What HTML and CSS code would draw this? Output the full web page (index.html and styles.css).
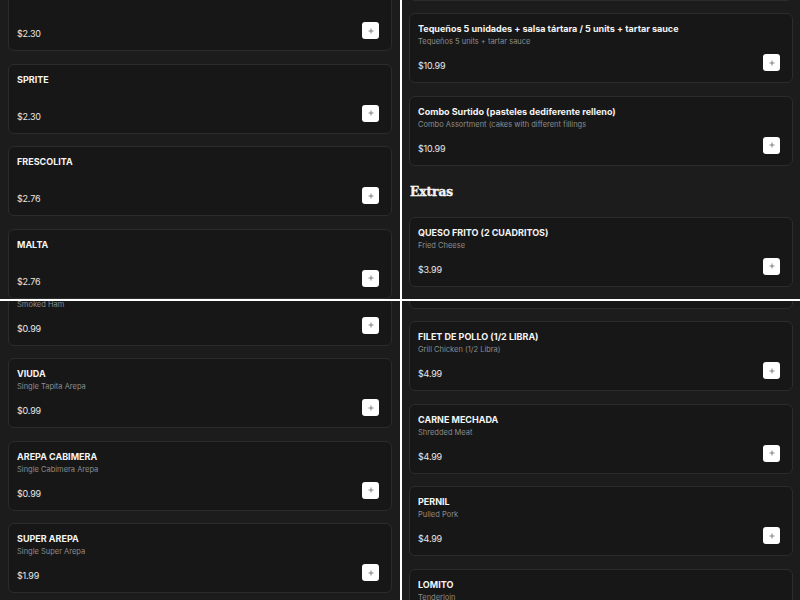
FILE: index.html
```html
<!DOCTYPE html>
<html lang="es">
<head>
<meta charset="utf-8">
<title>Menú</title>
<link rel="stylesheet" href="styles.css">
</head>
<body>
<main class="board">
  <section class="panel">
    <div class="feed feed-a">
      <article class="card"><div class="info"><h3 class="name">COCA COLA ZERO</h3></div><div class="foot"><span class="price">$2.30</span><button class="add" type="button" aria-label="Agregar"><svg viewBox="0 0 6 6" width="6" height="6"><path d="M3 0.5v5M0.5 3h5"/></svg></button></div></article>
      <article class="card"><div class="info"><h3 class="name">SPRITE</h3></div><div class="foot"><span class="price">$2.30</span><button class="add" type="button" aria-label="Agregar"><svg viewBox="0 0 6 6" width="6" height="6"><path d="M3 0.5v5M0.5 3h5"/></svg></button></div></article>
      <article class="card"><div class="info"><h3 class="name">FRESCOLITA</h3></div><div class="foot"><span class="price">$2.76</span><button class="add" type="button" aria-label="Agregar"><svg viewBox="0 0 6 6" width="6" height="6"><path d="M3 0.5v5M0.5 3h5"/></svg></button></div></article>
      <article class="card"><div class="info"><h3 class="name">MALTA</h3></div><div class="foot"><span class="price">$2.76</span><button class="add" type="button" aria-label="Agregar"><svg viewBox="0 0 6 6" width="6" height="6"><path d="M3 0.5v5M0.5 3h5"/></svg></button></div></article>
    </div>
  </section>
  <section class="panel panel-r">
    <div class="feed feed-b">
      <article class="card"><div class="info"><h3 class="name">Tequeños 10 unidades + salsa tártara</h3><p class="desc">Tequeños 10 units + tartar sauce</p></div><div class="foot"><span class="price">$19.99</span><button class="add" type="button" aria-label="Agregar"><svg viewBox="0 0 6 6" width="6" height="6"><path d="M3 0.5v5M0.5 3h5"/></svg></button></div></article>
      <article class="card"><div class="info"><h3 class="name">Tequeños 5 unidades + salsa tártara / 5 units + tartar sauce</h3><p class="desc">Tequeños 5 units + tartar sauce</p></div><div class="foot"><span class="price">$10.99</span><button class="add" type="button" aria-label="Agregar"><svg viewBox="0 0 6 6" width="6" height="6"><path d="M3 0.5v5M0.5 3h5"/></svg></button></div></article>
      <article class="card"><div class="info"><h3 class="name">Combo Surtido (pasteles dediferente relleno)</h3><p class="desc">Combo Assortment (cakes with different fillings</p></div><div class="foot"><span class="price">$10.99</span><button class="add" type="button" aria-label="Agregar"><svg viewBox="0 0 6 6" width="6" height="6"><path d="M3 0.5v5M0.5 3h5"/></svg></button></div></article>
      <h2 class="section-title">Extras</h2>
      <article class="card"><div class="info"><h3 class="name">QUESO FRITO (2 CUADRITOS)</h3><p class="desc">Fried Cheese</p></div><div class="foot"><span class="price">$3.99</span><button class="add" type="button" aria-label="Agregar"><svg viewBox="0 0 6 6" width="6" height="6"><path d="M3 0.5v5M0.5 3h5"/></svg></button></div></article>
      <article class="card"><div class="info"><h3 class="name">TAJADAS</h3><p class="desc">Fried Plantains</p></div><div class="foot"><span class="price">$3.99</span><button class="add" type="button" aria-label="Agregar"><svg viewBox="0 0 6 6" width="6" height="6"><path d="M3 0.5v5M0.5 3h5"/></svg></button></div></article>
    </div>
  </section>
  <section class="panel panel-b">
    <div class="feed feed-c">
      <article class="card"><div class="info"><h3 class="name">JAMÓN AHUMADO</h3><p class="desc">Smoked Ham</p></div><div class="foot"><span class="price">$0.99</span><button class="add" type="button" aria-label="Agregar"><svg viewBox="0 0 6 6" width="6" height="6"><path d="M3 0.5v5M0.5 3h5"/></svg></button></div></article>
      <article class="card"><div class="info"><h3 class="name">VIUDA</h3><p class="desc">Single Tapita Arepa</p></div><div class="foot"><span class="price">$0.99</span><button class="add" type="button" aria-label="Agregar"><svg viewBox="0 0 6 6" width="6" height="6"><path d="M3 0.5v5M0.5 3h5"/></svg></button></div></article>
      <article class="card"><div class="info"><h3 class="name">AREPA CABIMERA</h3><p class="desc">Single Cabimera Arepa</p></div><div class="foot"><span class="price">$0.99</span><button class="add" type="button" aria-label="Agregar"><svg viewBox="0 0 6 6" width="6" height="6"><path d="M3 0.5v5M0.5 3h5"/></svg></button></div></article>
      <article class="card"><div class="info"><h3 class="name">SUPER AREPA</h3><p class="desc">Single Super Arepa</p></div><div class="foot"><span class="price">$1.99</span><button class="add" type="button" aria-label="Agregar"><svg viewBox="0 0 6 6" width="6" height="6"><path d="M3 0.5v5M0.5 3h5"/></svg></button></div></article>
    </div>
  </section>
  <section class="panel panel-r panel-b">
    <div class="feed feed-d">
      <article class="card"><div class="info"><h3 class="name">POLLO</h3><p class="desc">Chicken</p></div><div class="foot"><span class="price">$4.99</span><button class="add" type="button" aria-label="Agregar"><svg viewBox="0 0 6 6" width="6" height="6"><path d="M3 0.5v5M0.5 3h5"/></svg></button></div></article>
      <article class="card"><div class="info"><h3 class="name">FILET DE POLLO (1/2 LIBRA)</h3><p class="desc">Grill Chicken (1/2 Libra)</p></div><div class="foot"><span class="price">$4.99</span><button class="add" type="button" aria-label="Agregar"><svg viewBox="0 0 6 6" width="6" height="6"><path d="M3 0.5v5M0.5 3h5"/></svg></button></div></article>
      <article class="card"><div class="info"><h3 class="name">CARNE MECHADA</h3><p class="desc">Shredded Meat</p></div><div class="foot"><span class="price">$4.99</span><button class="add" type="button" aria-label="Agregar"><svg viewBox="0 0 6 6" width="6" height="6"><path d="M3 0.5v5M0.5 3h5"/></svg></button></div></article>
      <article class="card"><div class="info"><h3 class="name">PERNIL</h3><p class="desc">Pulled Pork</p></div><div class="foot"><span class="price">$4.99</span><button class="add" type="button" aria-label="Agregar"><svg viewBox="0 0 6 6" width="6" height="6"><path d="M3 0.5v5M0.5 3h5"/></svg></button></div></article>
      <article class="card"><div class="info"><h3 class="name">LOMITO</h3><p class="desc">Tenderloin</p></div><div class="foot"><span class="price">$4.99</span><button class="add" type="button" aria-label="Agregar"><svg viewBox="0 0 6 6" width="6" height="6"><path d="M3 0.5v5M0.5 3h5"/></svg></button></div></article>
    </div>
  </section>
</main>
</body>
</html>
```

FILE: styles.css
```css
* { box-sizing: border-box; }
html, body { margin: 0; padding: 0; }
body {
  background: #ffffff;
  width: 800px;
  height: 600px;
  overflow: hidden;
  font-family: "Inter", "Open Sans", sans-serif;
}
.board {
  display: grid;
  grid-template-columns: 400px 398px;
  grid-template-rows: 299px 299px;
  gap: 2px;
  width: 800px;
  height: 600px;
}
.panel {
  background: #1c1c1c;
  overflow: hidden;
  padding: 0 8px 0 8px;
}
.panel-r { padding: 0 7px 0 7px; }
.feed { display: flex; flex-direction: column; gap: 12.5px; }
.feed-a { margin-top: -19px; }
.feed-b { margin-top: -69.5px; }
.feed-c { margin-top: -25.5px; }
.feed-d { margin-top: -62.5px; }
.card {
  height: 70px;
  flex: none;
  background: #171717;
  border: 1px solid #2c2c2c;
  border-radius: 6px;
  padding: 9px 12px 11px 8px;
  display: flex;
  flex-direction: column;
  justify-content: space-between;
}
.name {
  margin: 0;
  font-size: 9px;
  line-height: 12px;
  font-weight: 700;
  color: #f4f4f4;
  white-space: nowrap;
}
.desc {
  margin: 0;
  font-size: 7.5px;
  line-height: 13px;
  color: #8c8c8c;
  white-space: nowrap;
}
.foot {
  display: flex;
  justify-content: space-between;
  align-items: flex-end;
}
.price {
  font-size: 9px;
  line-height: 10px;
  color: #e8e8e8;
  font-weight: 400;
  letter-spacing: -0.2px;
}
.add {
  width: 17px;
  height: 17px;
  padding: 0;
  border: 0;
  border-radius: 3px;
  background: #ffffff;
  display: flex;
  align-items: center;
  justify-content: center;
}
.add svg { display: block; }
.add path { stroke: #666666; stroke-width: 0.8; fill: none; }
.section-title {
  margin: 0;
  height: 26px;
  line-height: 26px;
  font-family: "DejaVu Serif Condensed", "DejaVu Serif", serif;
  font-weight: 700;
  font-size: 13.5px;
  -webkit-text-stroke: 0.4px #f4f4f4;
  color: #f4f4f4;
  padding-left: 1px;
}
```
